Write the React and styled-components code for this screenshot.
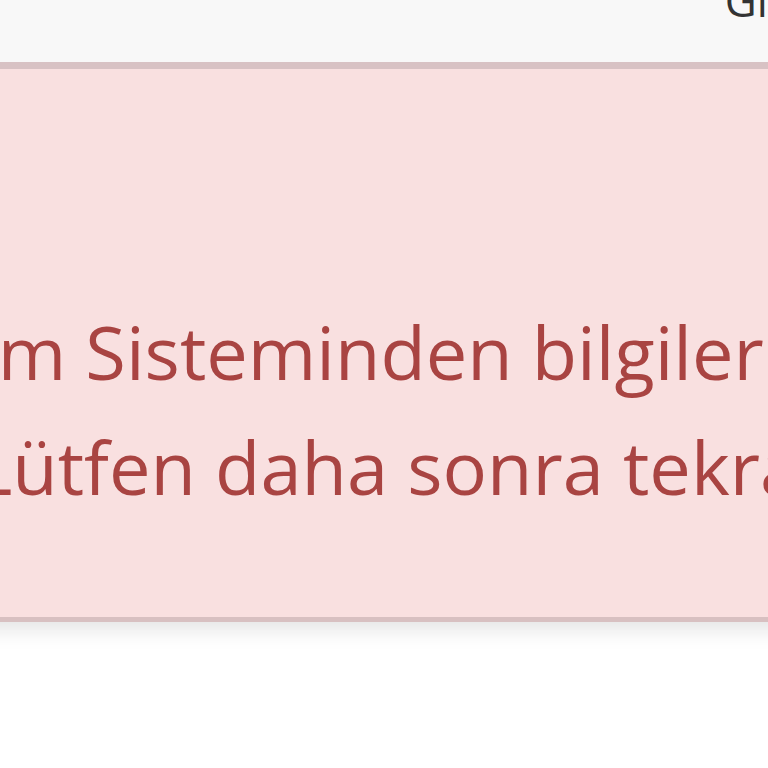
import styled, { createGlobalStyle } from "styled-components";

const GlobalStyle = createGlobalStyle`
    html, body {
        margin: 0;
        padding: 0;
        background: #ffffff;
        overflow: hidden;
        font-family: "Open Sans", "Liberation Sans", sans-serif;
    }
`;

const Page = styled("div")`
    width: 768px;
    height: 768px;
    overflow: hidden;
    display: flex;
    flex-direction: column;
`;

const Navbar = styled("header")`
    height: 62px;
    flex-shrink: 0;
    background: #f8f8f8;
    display: flex;
    justify-content: flex-end;
    align-items: flex-end;
    overflow: hidden;
    position: relative;
    z-index: 1;
`;

const NavLink = styled("a")`
    font-size: 44px;
    line-height: 1;
    color: #333333;
    margin-right: -50px;
    margin-bottom: 40px;
    text-decoration: none;
`;

const AlertWrap = styled("div")`
    margin-left: ${(p) => p.offset}px;
    width: ${(p) => p.width}px;
`;

const Alert = styled("div")`
    height: 560px;
    box-sizing: border-box;
    background: #f9e0e0;
    border-top: 7px solid #d8c2c4;
    border-bottom: 5px solid #d8c0c1;
    box-shadow: 0 12px 22px -6px rgba(0, 0, 0, 0.12);
    display: flex;
    flex-direction: column;
    justify-content: flex-start;
    color: #a94442;
    font-size: 74px;
    line-height: 115px;
    text-align: center;
    padding-top: 225px;
`;

const Line = styled("div")`
    white-space: nowrap;
`;

export default function App() {
    return (
        <>
            <GlobalStyle />
            <Page>
                <Navbar>
                    <NavLink href="#">Giriş</NavLink>
                </Navbar>
                <AlertWrap offset={-676} width={2524}>
                    <Alert role="alert">
                        <Line>Yönetim Sisteminden bilgileriniz alınamamıştır.</Line>
                        <Line>Lütfen daha sonra tekrar deneyiniz.</Line>
                    </Alert>
                </AlertWrap>
            </Page>
        </>
    );
}
